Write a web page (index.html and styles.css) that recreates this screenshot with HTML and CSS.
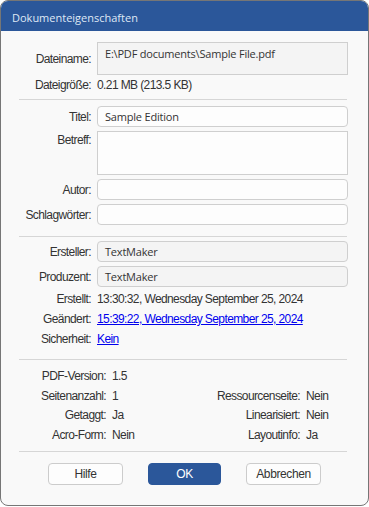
FILE: index.html
```html
<!DOCTYPE html>
<html lang="de">
<head>
<meta charset="utf-8">
<title>Dokumenteigenschaften</title>
<link rel="stylesheet" href="styles.css">
</head>
<body>
<div class="window">
  <div class="titlebar">Dokumenteigenschaften</div>
  <div class="content">
    <div class="section">
      <div class="row row-file">
        <div class="label">Dateiname:</div>
        <div class="field field-ro field-tall">E:\PDF documents\Sample File.pdf</div>
      </div>
      <div class="row row-text">
        <div class="label">Dateigröße:</div>
        <div class="value">0.21 MB (213.5 KB)</div>
      </div>
    </div>
    <div class="sep sep1"></div>
    <div class="section sec-meta">
      <div class="row row-input">
        <div class="label">Titel:</div>
        <div class="field">Sample Edition</div>
      </div>
      <div class="row row-area">
        <div class="label label-top">Betreff:</div>
        <div class="field field-area"></div>
      </div>
      <div class="row row-input">
        <div class="label">Autor:</div>
        <div class="field"></div>
      </div>
      <div class="row row-input">
        <div class="label">Schlagwörter:</div>
        <div class="field"></div>
      </div>
    </div>
    <div class="sep sep2"></div>
    <div class="section sec-prod">
      <div class="row row-input">
        <div class="label">Ersteller:</div>
        <div class="field field-ro">TextMaker</div>
      </div>
      <div class="row row-input">
        <div class="label">Produzent:</div>
        <div class="field field-ro">TextMaker</div>
      </div>
      <div class="row row-text">
        <div class="label">Erstellt:</div>
        <div class="value">13:30:32, Wednesday September 25, 2024</div>
      </div>
      <div class="row row-text">
        <div class="label">Geändert:</div>
        <div class="value"><a class="link" href="#">15:39:22, Wednesday September 25, 2024</a></div>
      </div>
      <div class="row row-text">
        <div class="label">Sicherheit:</div>
        <div class="value"><a class="link" href="#">Kein</a></div>
      </div>
    </div>
    <div class="sep sep3"></div>
    <div class="pdfinfo">
      <div class="pair"><span class="plabel">PDF-Version:</span><span class="pval">1.5</span></div>
      <div class="pair"></div>
      <div class="pair"><span class="plabel">Seitenanzahl:</span><span class="pval">1</span></div>
      <div class="pair pair-r"><span class="plabel">Ressourcenseite:</span><span class="pval">Nein</span></div>
      <div class="pair"><span class="plabel">Getaggt:</span><span class="pval">Ja</span></div>
      <div class="pair pair-r"><span class="plabel">Linearisiert:</span><span class="pval">Nein</span></div>
      <div class="pair"><span class="plabel">Acro-Form:</span><span class="pval">Nein</span></div>
      <div class="pair pair-r"><span class="plabel">Layoutinfo:</span><span class="pval">Ja</span></div>
    </div>
    <div class="sep sep4"></div>
    <div class="buttons">
      <button class="btn">Hilfe</button>
      <button class="btn btn-primary">OK</button>
      <button class="btn">Abbrechen</button>
    </div>
  </div>
</div>
</body>
</html>
```

FILE: styles.css
```css
* { box-sizing: border-box; }
html, body { margin: 0; padding: 0; background: #ffffff; }
body {
  width: 369px;
  height: 507px;
  font-family: "Liberation Sans", Arial, sans-serif;
  font-size: 12px;
  letter-spacing: -0.6px;
  color: #333333;
}
.window {
  width: 369px;
  height: 506px;
  border: 1px solid #767676;
  border-radius: 8px;
  overflow: hidden;
  background: #f9f9f9;
}
.titlebar {
  height: 30px;
  background: #2b579a;
  color: #dfe8f5;
  font-family: "Open Sans", "Noto Sans", sans-serif;
  font-size: 11px;
  letter-spacing: 0;
  line-height: 26px;
  padding-top: 4px;
  padding-left: 11px;
}
.content {
  padding: 11px 20px 0 18px;
}
.row {
  display: flex;
  align-items: center;
}
.label {
  width: 73px;
  flex: none;
  text-align: right;
  padding-right: 1px;
  white-space: nowrap;
}
.label-top { align-self: flex-start; padding-top: 2px; }
.value {
  margin-left: 5px;
  white-space: nowrap;
}
.field {
  margin-left: 5px;
  flex: 1;
  height: 21px;
  border: 1px solid #cfcfcf;
  border-radius: 4px;
  background: #fdfdfd;
  font-family: "Open Sans", "Noto Sans", sans-serif;
  font-size: 11px;
  letter-spacing: -0.2px;
  color: #333;
  line-height: 19px;
  padding-left: 7px;
  white-space: nowrap;
}
.field-ro { background: #f4f4f4; }
.field-tall {
  height: 33px;
  border-radius: 0;
  line-height: 18px;
  padding-top: 2px;
  align-self: flex-start;
}
.row-file { height: 33px; }
.row-text { height: 20px; }
.row-input { height: 21px; }
.row-area { height: 44px; }
.field-area { height: 44px; border-radius: 0; }
.sec-meta { display: flex; flex-direction: column; gap: 4px; }
.sec-prod { display: flex; flex-direction: column; }
.sec-prod .row-input + .row-input { margin-top: 4px; }
.sec-prod .row-text:nth-child(3) { margin-top: 2px; }
.sep {
  height: 1px;
  background: #d6d6d6;
  margin-right: 1px;
}
.sep1 { margin-top: 4px; margin-bottom: 6px; }
.sep2 { margin-top: 11px; margin-bottom: 4px; }
.sep3 { margin-top: 10px; margin-bottom: 6px; }
.sep4 { margin-top: 6px; margin-bottom: 11px; }
.link { color: #0000ee; text-decoration: underline; }
.pdfinfo {
  display: grid;
  grid-template-columns: 157px 1fr;
  grid-auto-rows: 19.7px;
  align-items: center;
  padding-left: 12px;
}
.pair { display: flex; white-space: nowrap; }
.plabel {
  width: 75px;
  text-align: right;
}
.pval { margin-left: 6px; }
.pair-r .plabel { width: 112px; }
.buttons {
  display: flex;
  padding-left: 29px;
  gap: 25px;
}
.btn {
  width: 75px;
  height: 22px;
  border: 1px solid #cccccc;
  border-radius: 4px;
  background: #fdfdfd;
  font-family: "Liberation Sans", Arial, sans-serif;
  font-size: 12px;
  letter-spacing: -0.4px;
  color: #333;
  padding: 0;
}
.btn-primary {
  background: #2b579a;
  border-color: #2b579a;
  color: #ffffff;
  width: 73px;
}
```
